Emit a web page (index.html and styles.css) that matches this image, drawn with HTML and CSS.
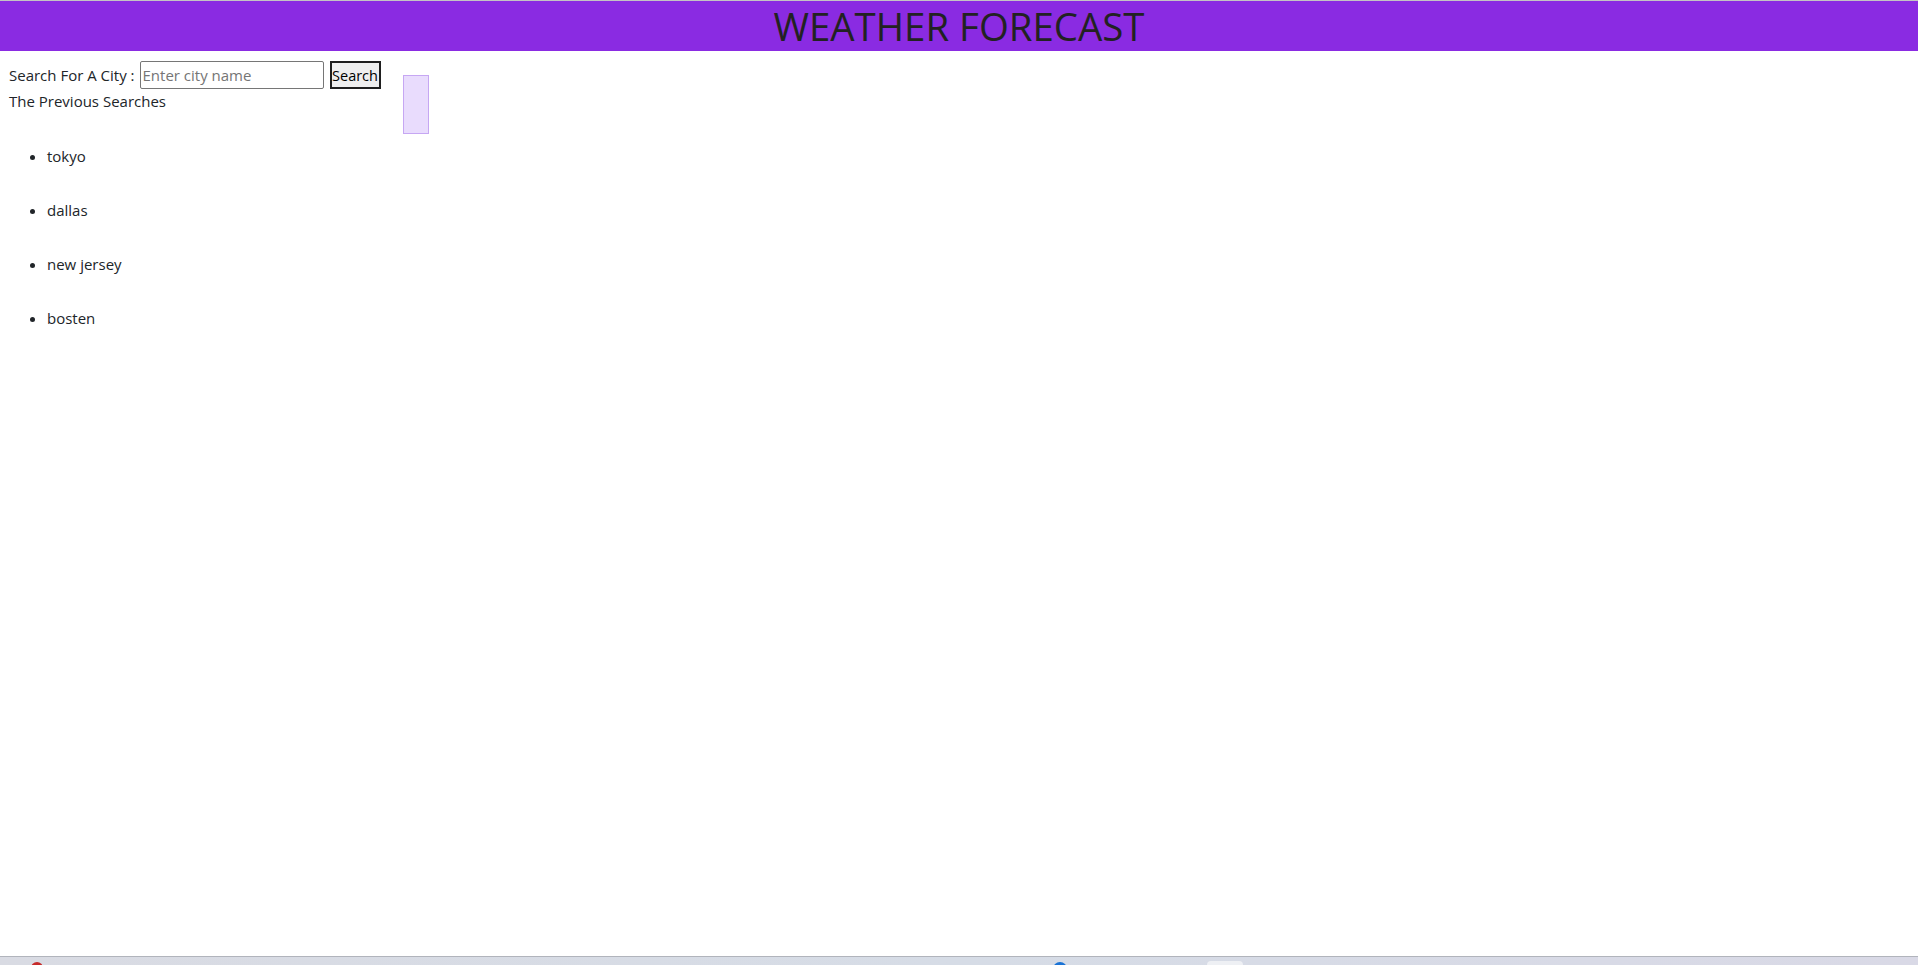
FILE: index.html
```html
<!DOCTYPE html>
<html lang="en">
<head>
<meta charset="utf-8">
<title>Weather Forecast</title>
<link rel="stylesheet" href="styles.css">
</head>
<body>
<header class="top-bar">
  <h1 class="title">WEATHER FORECAST</h1>
</header>
<main class="content">
  <section class="sidebar">
    <form class="search-row">
      <label class="search-label" for="city">Search For A City :</label>
      <input class="city-input" id="city" type="text" placeholder="Enter city name">
      <button class="search-btn" type="button">Search</button>
    </form>
    <div class="prev-title">The Previous Searches</div>
    <ul class="history">
      <li>tokyo</li>
      <li>dallas</li>
      <li>new jersey</li>
      <li>bosten</li>
    </ul>
  </section>
  <div class="forecast-box"></div>
</main>
<footer class="taskbar">
  <span class="tb-icon tb-red"></span>
  <span class="tb-icon tb-blue"></span>
  <span class="tb-icon tb-white"></span>
</footer>
</body>
</html>
```

FILE: styles.css
```css
html, body {
  margin: 0;
  padding: 0;
}
body {
  min-height: 100vh;
  display: flex;
  flex-direction: column;
  font-family: "Open Sans", "Noto Sans", sans-serif;
  font-size: 15px;
  line-height: 24px;
  color: #212529;
  background: #fff;
}
.top-bar {
  border-top: 1px solid #c4c4c4;
  background: #8a2be2;
  height: 50px;
  display: flex;
  align-items: center;
  justify-content: center;
}
.title {
  margin: 0;
  font-size: 38.4px;
  font-weight: 400;
  line-height: 48px;
  color: #222;
}
.content {
  flex: 1;
  display: flex;
  align-items: flex-start;
  padding: 10px 8px 0 8px;
  gap: 22px;
}
.sidebar {
  display: flex;
  flex-direction: column;
}
.search-row {
  display: flex;
  align-items: center;
  margin: 0;
  height: 28px;
}
.search-label {
  padding-left: 1px;
}
.city-input {
  margin-left: 5px;
  width: 184px;
  height: 28px;
  box-sizing: border-box;
  border: 1px solid #767676;
  border-radius: 2px;
  padding: 1px 2px;
  font-family: inherit;
  font-size: 15px;
  color: #212529;
}
.city-input::placeholder {
  color: #757575;
}
.search-btn {
  margin-left: 6px;
  width: 51px;
  height: 28px;
  box-sizing: border-box;
  border: 2px solid #1f1f1f;
  background: #efefef;
  padding: 0;
  font-family: inherit;
  font-size: 14.5px;
  color: #000;
}
.prev-title {
  margin-top: 0;
  padding-left: 1px;
}
.history {
  margin: 16px 0 0 0;
  padding-left: 39px;
}
.history li {
  padding: 15px 0;
}
.forecast-box {
  margin-top: 14px;
  width: 26px;
  height: 59px;
  box-sizing: border-box;
  background: #e9dcfd;
  border: 1px solid #c6a7f3;
}
.taskbar {
  height: 8px;
  border-top: 1px solid #b1b4bc;
  background: linear-gradient(90deg, #d9dbe3 0%, #d6dce6 50%, #d9d9e6 100%);
  position: relative;
  overflow: hidden;
}
.tb-icon {
  position: absolute;
  top: 5px;
  border-radius: 50%;
}
.tb-red {
  left: 31px;
  width: 12px;
  height: 12px;
  background: #c62a2a;
}
.tb-blue {
  left: 1053px;
  width: 14px;
  height: 14px;
  background: #1a73d6;
}
.tb-white {
  left: 1207px;
  top: 4px;
  width: 36px;
  height: 12px;
  border-radius: 4px;
  background: #eef0f4;
}
```
